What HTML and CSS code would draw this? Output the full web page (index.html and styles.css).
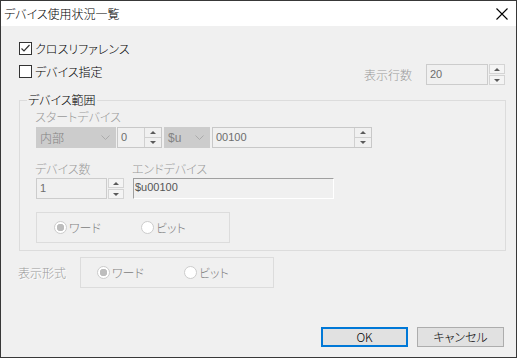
FILE: index.html
```html
<!DOCTYPE html>
<html lang="ja">
<head>
<meta charset="utf-8">
<title>デバイス使用状況一覧</title>
<link rel="stylesheet" href="styles.css">
</head>
<body>
<div class="window">
    <div class="titlebar">
        <span class="title">デバイス使用状況一覧</span>
        <svg class="close" width="12" height="12" viewBox="0 0 12 12">
            <path d="M0.5 0.5 L11.5 11.5 M11.5 0.5 L0.5 11.5" stroke="#000" stroke-width="1.1" fill="none"/>
        </svg>
    </div>
    <div class="content">
        <label class="check row1">
            <span class="box"><svg width="11" height="11" viewBox="0 0 11 11"><path d="M1.5 5.5 L4 8 L9.5 2" stroke="#333" stroke-width="1.2" fill="none"/></svg></span>
            <span class="txt">クロスリファレンス</span>
        </label>
        <div class="row2">
            <label class="check">
                <span class="box"></span>
                <span class="txt">デバイス指定</span>
            </label>
            <div class="linecount">
                <span class="dis">表示行数</span>
                <div class="edit ed-lines">20</div>
                <div class="spin-sep"><span class="sbtn"><i class="up"></i></span><span class="sbtn"><i class="down"></i></span></div>
            </div>
        </div>

        <div class="group">
            <div class="group-title">デバイス範囲</div>
            <div class="dis lbl-start">スタートデバイス</div>
            <div class="ctl-row">
                <div class="combo cb-area"><span>内部</span><svg width="9" height="5" viewBox="0 0 9 5"><path d="M0.5 0.5 L4.5 4.5 L8.5 0.5" stroke="#ababab" fill="none"/></svg></div>
                <div class="spinedit se-small"><span class="val">0</span><div class="spin-in"><span class="sbtn"><i class="up"></i></span><span class="sbtn"><i class="down"></i></span></div></div>
                <div class="combo cb-dev"><span>$u</span><svg width="9" height="5" viewBox="0 0 9 5"><path d="M0.5 0.5 L4.5 4.5 L8.5 0.5" stroke="#ababab" fill="none"/></svg></div>
                <div class="spinedit se-addr"><span class="val">00100</span><div class="spin-in"><span class="sbtn"><i class="up"></i></span><span class="sbtn"><i class="down"></i></span></div></div>
            </div>
            <div class="lbl-row">
                <span class="dis lbl-count">デバイス数</span>
                <span class="dis">エンドデバイス</span>
            </div>
            <div class="ctl-row2">
                <div class="edit ed-count">1</div>
                <div class="spin-sep"><span class="sbtn"><i class="up"></i></span><span class="sbtn"><i class="down"></i></span></div>
                <div class="readonly">$u00100</div>
            </div>
            <div class="radiobox inner">
                <label class="radio-item"><span class="radio on"></span>ワード</label>
                <label class="radio-item"><span class="radio"></span>ビット</label>
            </div>
        </div>

        <div class="format-row">
            <span class="dis lbl-format">表示形式</span>
            <div class="radiobox fmt">
                <label class="radio-item"><span class="radio on"></span>ワード</label>
                <label class="radio-item"><span class="radio"></span>ビット</label>
            </div>
        </div>

        <div class="buttons">
            <div class="btn default">OK</div>
            <div class="btn">キャンセル</div>
        </div>
    </div>
</div>
</body>
</html>
```

FILE: styles.css
```css
body{
    margin: 0;
    background-color: #ffffff;
    font-family: "Noto Sans CJK JP", sans-serif;
    font-feature-settings: "palt";
    font-size: 12px;
    font-weight: 300;
    color: #000;
}
.window{
    width: 515px;
    height: 356px;
    border: 1px solid #383838;
    display: flex;
    flex-direction: column;
}
.titlebar{
    height: 25px;
    background-color: #fff;
    display: flex;
    align-items: center;
    justify-content: space-between;
}
.title{
    margin-left: 3px;
    line-height: 14px;
}
.close{
    margin-right: 8px;
}
.content{
    flex: 1;
    background-color: #f0f0f0;
    display: flex;
    flex-direction: column;
    padding: 0 10px 10px 18px;
}

/* checkboxes */
.check{
    display: flex;
    align-items: center;
    height: 13px;
}
.row1{
    margin-top: 16px;
}
.box{
    width: 11px;
    height: 11px;
    border: 1px solid #333;
    background-color: #fff;
    display: flex;
}
.check .txt{
    margin-left: 3px;
    line-height: 14px;
}
.row2{
    margin-top: 9px;
    height: 21px;
    display: flex;
    align-items: flex-start;
}
.row2 .check{
    margin-top: 1px;
}
.linecount{
    margin-left: auto;
    margin-right: 1px;
    display: flex;
    align-items: center;
    height: 21px;
}
.dis{
    color: #9a9a9a;
    line-height: 14px;
}

/* edits and spins */
.edit{
    box-sizing: border-box;
    height: 21px;
    border: 1px solid #cccccc;
    background-color: #f0f0f0;
    color: #6d6d6d;
    font-family: "Liberation Sans", sans-serif;
    font-weight: 400;
    font-size: 11px;
    line-height: 19px;
    padding-left: 3px;
}
.ed-lines{
    width: 62px;
    margin-left: 14px;
}
.ed-count{
    width: 71px;
}
.spin-sep{
    margin-left: 1px;
    width: 16px;
    height: 21px;
    display: flex;
    flex-direction: column;
    gap: 1px;
}
.spin-sep .sbtn{
    flex: 1;
    box-sizing: border-box;
    border: 1px solid #d4d4d4;
    background-color: #f4f4f4;
}
.sbtn{
    display: flex;
    align-items: center;
    justify-content: center;
}
.up{
    width: 0;
    height: 0;
    border-left: 3px solid transparent;
    border-right: 3px solid transparent;
    border-bottom: 3px solid #5a5a5a;
}
.down{
    width: 0;
    height: 0;
    border-left: 3px solid transparent;
    border-right: 3px solid transparent;
    border-top: 3px solid #5a5a5a;
}

/* group box */
.group{
    box-sizing: border-box;
    margin-top: 15px;
    width: 487px;
    height: 151px;
    border: 1px solid #dcdcdc;
    padding-left: 15px;
}
.group-title{
    width: fit-content;
    margin-top: -8px;
    margin-left: -8px;
    padding: 0 1px;
    background-color: #f0f0f0;
    line-height: 14px;
}
.lbl-start{
    margin-top: 3px;
}
.ctl-row{
    margin-top: 3px;
    margin-left: 1px;
    height: 21px;
    display: flex;
    gap: 1px;
}
.combo{
    box-sizing: border-box;
    height: 21px;
    background-color: #cccccc;
    border: 1px solid #cccccc;
    color: #838383;
    display: flex;
    align-items: center;
    justify-content: space-between;
    padding: 0 5px 0 3px;
    line-height: 14px;
}
.cb-area{
    width: 80px;
}
.cb-dev{
    width: 46px;
    margin-left: 1px;
    font-family: "Liberation Sans", sans-serif;
    font-weight: 400;
}
.spinedit{
    box-sizing: border-box;
    height: 21px;
    border: 1px solid #c8c8c8;
    background-color: #f0f0f0;
    display: flex;
    justify-content: space-between;
}
.spinedit .val{
    color: #6d6d6d;
    font-family: "Liberation Sans", sans-serif;
    font-weight: 400;
    font-size: 11px;
    line-height: 19px;
    padding-left: 3px;
}
.se-small{
    width: 45px;
}
.se-addr{
    width: 160px;
    margin-left: 1px;
}
.spin-in{
    width: 16px;
    border-left: 1px solid #d0d0d0;
    display: flex;
    flex-direction: column;
}
.spin-in .sbtn{
    flex: 1;
}
.spin-in .sbtn + .sbtn{
    border-top: 1px solid #d0d0d0;
}
.lbl-row{
    margin-top: 14px;
    display: flex;
}
.lbl-count{
    width: 97px;
}
.ctl-row2{
    margin-top: 2px;
    margin-left: 1px;
    display: flex;
    height: 21px;
}
.readonly{
    box-sizing: border-box;
    margin-left: 9px;
    width: 201px;
    height: 21px;
    border-top: 1px solid #a0a0a0;
    border-left: 1px solid #a0a0a0;
    border-right: 1px solid #fff;
    border-bottom: 1px solid #fff;
    color: #555;
    font-family: "Liberation Sans", sans-serif;
    font-weight: 400;
    font-size: 11px;
    line-height: 17px;
    padding-left: 1px;
}

/* radios */
.radiobox{
    box-sizing: border-box;
    width: 194px;
    height: 31px;
    border: 1px solid #dcdcdc;
    display: flex;
    align-items: center;
}
.inner{
    margin-top: 13px;
    margin-left: 1px;
    padding-left: 17px;
}
.radio-item{
    width: 87px;
    display: flex;
    align-items: center;
    color: #808080;
    line-height: 14px;
}
.radio{
    box-sizing: border-box;
    width: 13px;
    height: 13px;
    border: 1px solid #cccccc;
    border-radius: 50%;
    background-color: #fff;
    margin-right: 2px;
}
.radio.on{
    background: radial-gradient(circle, #bdbdbd 0 3.5px, #fff 4px);
}
.format-row{
    margin-top: 6px;
    display: flex;
    align-items: center;
}
.lbl-format{
    margin-left: -1px;
    width: 62px;
    text-shadow: 1px 1px 0 #fff;
}
.fmt{
    padding-left: 16px;
}

/* buttons */
.buttons{
    margin-top: auto;
    margin-right: 2px;
    display: flex;
    justify-content: flex-end;
    gap: 9px;
}
.btn{
    box-sizing: border-box;
    width: 87px;
    height: 20px;
    border: 1px solid #adadad;
    background-color: #e1e1e1;
    text-align: center;
    line-height: 18px;
}
.btn.default{
    border: 2px solid #0078d7;
    line-height: 16px;
}
```
